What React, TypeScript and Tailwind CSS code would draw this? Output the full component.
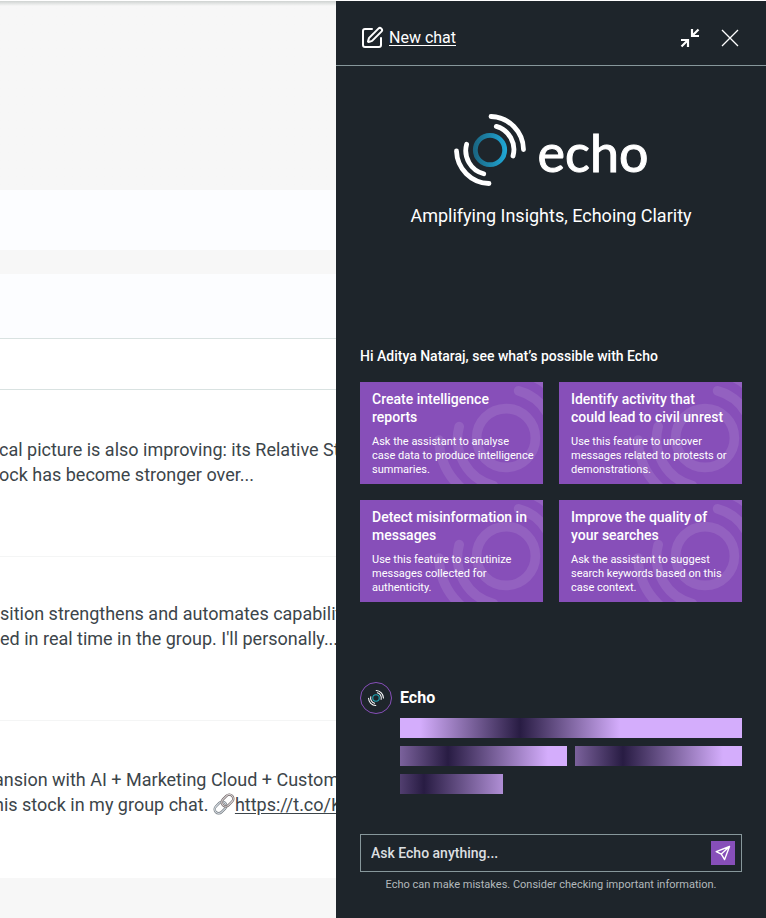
import { SquarePen } from 'lucide-react';
import { useState } from 'react';

const suggestions = [
    {
        title: 'Create intelligence\nreports',
        body: 'Ask the assistant to analyse\ncase data to produce intelligence\nsummaries.',
    },
    {
        title: 'Identify activity that\ncould lead to civil unrest',
        body: 'Use this feature to uncover\nmessages related to protests or\ndemonstrations.',
    },
    {
        title: 'Detect misinformation in\nmessages',
        body: 'Use this feature to scrutinize\nmessages collected for\nauthenticity.',
    },
    {
        title: 'Improve the quality of\nyour searches',
        body: 'Ask the assistant to suggest\nsearch keywords based on this\ncase context.',
    },
];

interface EchoMarkProps {
    className?: string;
    ring?: string;
}

// Ring with two sound waves on either side
const EchoMark = ({ className, ring = 'currentColor' }: EchoMarkProps) => (
    <svg viewBox="-36 -36 72 72" fill="none" strokeWidth="4.8" strokeLinecap="round" className={className} aria-hidden="true">
        <defs>
            <linearGradient id="echo-ring" x1="-17" y1="0" x2="17" y2="0" gradientUnits="userSpaceOnUse">
                <stop offset="0" stopColor="#1a6480" />
                <stop offset="1" stopColor="#20a9d8" />
            </linearGradient>
        </defs>
        <circle r="14.7" stroke={ring} />
        <path
            stroke="currentColor"
            d="M1 -33.5A33.5 33.5 0 0 1 33.5 -0.5M6.3 -23.6A24 24 0 0 1 23 6M-33.5 1A33.5 33.5 0 0 0 -1 33.5M-23.4 -5.7A24 24 0 0 0 -6.3 23.8"
        />
    </svg>
);

const CollapseIcon = () => (
    <svg width="20" height="20" viewBox="0 0 20 20" fill="none" stroke="currentColor" strokeWidth="2.2" aria-hidden="true">
        <path d="M18.5 1.5 12.5 7.5M12 1V8H19M1.5 18.5 7.5 12.5M1 12H8V19" />
    </svg>
);

const CloseIcon = () => (
    <svg width="18" height="18" viewBox="0 0 18 18" fill="none" stroke="currentColor" strokeWidth="1.3" aria-hidden="true">
        <path d="M1 1 17 17M17 1 1 17" />
    </svg>
);

const SendIcon = () => (
    <svg width="16" height="16" viewBox="0 0 16 16" fill="none" stroke="currentColor" strokeWidth="1.4" strokeLinejoin="round" aria-hidden="true">
        <path d="M14.5 1.5 1.2 6.6 6.3 9.1 9.6 14.6ZM14.5 1.5 6.3 9.1" />
    </svg>
);

const LinkIcon = () => (
    <svg width="22" height="22" viewBox="0 0 22 22" fill="none" className="inline-block align-[-4px]" aria-hidden="true">
        <g transform="rotate(-45 11 11)">
            <rect x="-0.5" y="7" width="13" height="8" rx="4" stroke="#6f767b" strokeWidth="2.4" />
            <rect x="-0.5" y="7" width="13" height="8" rx="4" stroke="#d3d9e0" strokeWidth="1.2" />
            <rect x="9.5" y="7" width="13" height="8" rx="4" stroke="#6b6262" strokeWidth="2.4" />
            <rect x="9.5" y="7" width="13" height="8" rx="4" stroke="#d9d3d5" strokeWidth="1.2" />
        </g>
    </svg>
);

function MessageFeed() {
    return (
        <main className="min-w-0 flex-1 overflow-hidden bg-[#f7f7f7]">
            <div className="h-[189px] bg-linear-to-b from-[#cfd3d1] to-[#f7f7f7] to-[5px]" />
            <div className="h-[60px] bg-[#fcfdff]" />
            <div className="mt-6 h-[65px] border-b border-[#d9e2e1] bg-[#fcfdff]" />
            <div className="h-[51px] border-b border-[#d9e2e1] bg-white" />
            <ul className="divide-y divide-[#f4f5f5] bg-white text-lg leading-[25px] whitespace-nowrap text-[#3c454a]">
                <li className="-ml-px h-[167px] pt-[47px]">
                    <p>cal picture is also improving: its Relative Strength</p>
                    <p>ock has become stronger over...</p>
                </li>
                <li className="h-[164px] pt-11">
                    <p>sition strengthens and automates capabilities</p>
                    <p>ed in real time in the group. I'll personally...</p>
                </li>
                <li className="-ml-1.5 h-[157px] pt-[46px]">
                    <p>ansion with AI + Marketing Cloud + Customer</p>
                    <p>
                        his stock in my group chat. <LinkIcon />
                        <a href="#link" className="underline underline-offset-2">https://t.co/Kx</a>
                    </p>
                </li>
            </ul>
        </main>
    );
}

function SuggestionCard({ title, body }: { title: string; body: string }) {
    return (
        <button
            type="button"
            className="relative flex flex-col gap-[9px] overflow-hidden bg-[#874fb9] pt-2 pr-2 pb-[7px] pl-3 text-left whitespace-pre-line"
        >
            <EchoMark className="absolute -top-4 left-[74px] size-36 text-white/10" />
            <span className="relative text-sm leading-[18px] font-medium">{title}</span>
            <span className="relative text-[11px] leading-[14px]">{body}</span>
        </button>
    );
}

// Placeholder bars shown while the reply is being written
const ReplySkeleton = () => (
    <div className="flex flex-col gap-2" role="status" aria-label="Loading reply">
        <div className="h-5 bg-[linear-gradient(90deg,#d4adfc_20px,#281c43_120px,#d4adfc_220px)]" />
        <div className="grid grid-cols-2 gap-2">
            <div className="h-5 bg-[linear-gradient(90deg,#d4adfc_-52px,#281c43_48px,#d4adfc_148px)]" />
            <div className="h-5 bg-[linear-gradient(90deg,#d4adfc_-52px,#281c43_48px,#d4adfc_148px)]" />
        </div>
        <div className="h-5 w-[30%] bg-[linear-gradient(90deg,#d4adfc_-76px,#281c43_24px,#d4adfc_124px)]" />
    </div>
);

function EchoPanel() {
    const [prompt, setPrompt] = useState('');

    return (
        <aside className="flex w-[430px] shrink-0 flex-col bg-[#1e252b] text-white">
            <header className="flex h-[65px] items-center justify-between border-b border-[#87979b] px-6 pt-2.5">
                <button type="button" className="flex items-center gap-[5px]">
                    <SquarePen size={24} strokeWidth={2} />
                    <span className="underline underline-offset-2">New chat</span>
                </button>
                <div className="flex items-center gap-[21px] pr-[3px]">
                    <button type="button" aria-label="Collapse panel"><CollapseIcon /></button>
                    <button type="button" aria-label="Close panel"><CloseIcon /></button>
                </div>
            </header>

            <div className="flex flex-1 flex-col px-6 pb-[26px]">
                <div className="flex flex-col items-center gap-[18px] pt-12">
                    <h1 className="flex h-18 items-center gap-3">
                        <EchoMark className="size-18" ring="url(#echo-ring)" />
                        <span className="pt-1 font-[Lato,sans-serif] text-[52px] leading-none [-webkit-text-stroke:1px_white]">echo</span>
                    </h1>
                    <p className="text-lg leading-6">Amplifying Insights, Echoing Clarity</p>
                </div>

                <h2 className="mt-auto text-sm leading-5 font-medium">Hi Aditya Nataraj, see what’s possible with Echo</h2>
                <div className="mt-4 grid grid-cols-2 gap-4">
                    {suggestions.map((item) => (
                        <SuggestionCard key={item.title} {...item} />
                    ))}
                </div>

                <section className="mt-20 flex gap-2">
                    <div className="flex size-8 shrink-0 items-center justify-center rounded-full border border-[#874fb9]">
                        <EchoMark className="size-4" ring="#20a9b8" />
                    </div>
                    <div className="flex-1">
                        <h3 className="mb-1 leading-8 font-bold">Echo</h3>
                        <ReplySkeleton />
                    </div>
                </section>

                <form
                    className="mt-10 flex h-[38px] items-center border border-[#87979b] pr-1.5 pl-2.5"
                    onSubmit={(e) => e.preventDefault()}
                >
                    <input
                        type="text"
                        aria-label="Ask Echo anything"
                        placeholder="Ask Echo anything..."
                        value={prompt}
                        onChange={(e) => setPrompt(e.target.value)}
                        className="min-w-0 flex-1 bg-transparent text-sm font-medium outline-none placeholder:text-[#dcdfe0]"
                    />
                    <button type="submit" aria-label="Send" className="flex size-6 items-center justify-center bg-[#874fb9]">
                        <SendIcon />
                    </button>
                </form>
                <p className="mt-1.5 text-center text-[11px] leading-[14px] text-[#b3b9bc]">
                    Echo can make mistakes. Consider checking important information.
                </p>
            </div>
        </aside>
    );
}

export default function App() {
    return (
        <div className="flex min-h-screen border-t border-white font-[Roboto,sans-serif]">
            <MessageFeed />
            <EchoPanel />
        </div>
    );
}
